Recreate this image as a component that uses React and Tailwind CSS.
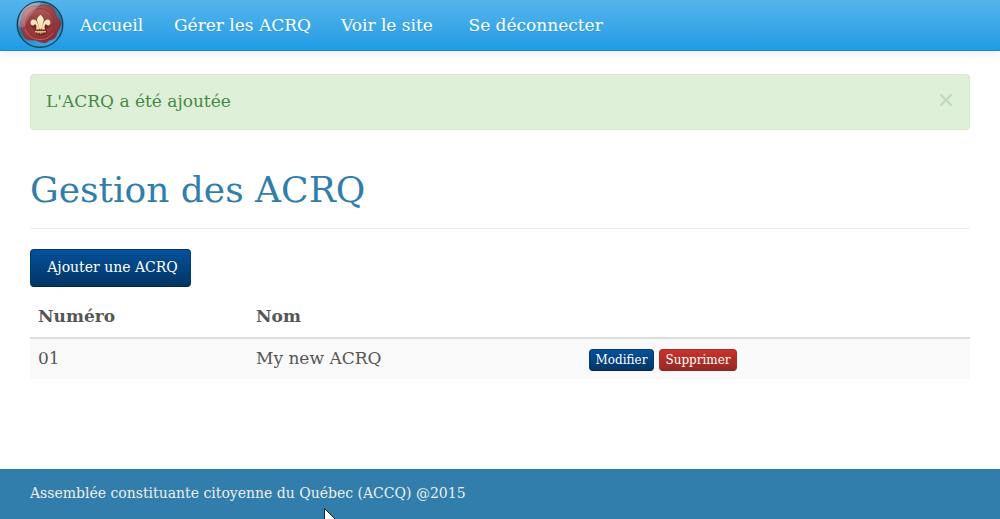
import React from "react";

const links = [
  { label: "Accueil", space: "w-[94px]" },
  { label: "Gérer les ACRQ", space: "w-[167px]" },
  { label: "Voir le site", space: "w-[127.5px]" },
  { label: "Se déconnecter", space: "" },
];

function Logo() {
  return (
    <svg viewBox="0 0 48 48" className="size-12 shrink-0">
      <defs>
        <linearGradient id="glass" x1="0" y1="0" x2="0.35" y2="1">
          <stop offset="0" stopColor="#8fb0c8" />
          <stop offset="0.3" stopColor="#4a7da3" />
          <stop offset="0.65" stopColor="#2b719f" />
          <stop offset="1" stopColor="#3ba0dd" />
        </linearGradient>
        <radialGradient id="wax" cx="0.35" cy="0.25" r="0.8">
          <stop offset="0" stopColor="#b9706f" />
          <stop offset="0.5" stopColor="#a04547" />
          <stop offset="1" stopColor="#87292e" />
        </radialGradient>
        <linearGradient id="seal" x1="0" y1="0" x2="0" y2="1">
          <stop offset="0" stopColor="#ab5c5a" />
          <stop offset="0.5" stopColor="#93393b" />
          <stop offset="1" stopColor="#a33437" />
        </linearGradient>
        <linearGradient id="shine" x1="0" y1="0" x2="0.9" y2="0.9">
          <stop offset="0" stopColor="#fff" stopOpacity="0.5" />
          <stop offset="1" stopColor="#fff" stopOpacity="0" />
        </linearGradient>
        <linearGradient id="gold" x1="0" y1="0" x2="0" y2="1">
          <stop offset="0" stopColor="#fff3cf" />
          <stop offset="0.75" stopColor="#f0d8a2" />
          <stop offset="1" stopColor="#c58c4e" />
        </linearGradient>
      </defs>
      <circle cx="24" cy="24.500" r="22.800" fill="url(#glass)" stroke="#1d4059" strokeWidth="1.4" />
      <path d="M12 8C16 5 20 7 26 5.500C32 4 38 7 39 13C40 18 46 21 44.500 25C44 29 41 31 40 36C38 40 34 39 31 42C27 44 23 41 19 40C14 40 9 40 8 36C7 31 5 29 5 25C4 21 7 19 7 15C7 11 9 9 12 8Z" fill="url(#wax)" stroke="#7b3037" strokeWidth="0.6" />
      <circle cx="24" cy="23" r="14.500" fill="url(#seal)" stroke="#802e33" strokeWidth="0.7" />
      <path d="M9 29A16 16 0 0 0 37 33" fill="none" stroke="#c36461" strokeWidth="0.9" />
      <path d="M25 17C28 19 28 22 28 21C32 19 37 23 33 27L29 30H31V34L25 36L20 34V31L15 26C14 23 18 21 21 23Z" fill="#571b1e" opacity="0.6" />
      <path d="M24.500 14.800C20.500 18 20.500 20 22 23L23.500 29.500H25.500L27 23C28.500 20 28 18 24.500 14.800ZM23 29.500C23 23.500 20 19.500 17.500 19.500C14 19.500 13.500 24.500 16.500 25.500C18 26 19 24 19 24C21 25 20.500 27 20 29.500ZM26 29.500C26 23.500 29 19.500 31.500 19.500C35 19.500 35.500 24.500 32.500 25.500C31 26 30 24 30 24C28 25 28.500 27 29 29.500ZM19 31H30V32.500H27L26 33.800L25 32.500L24.500 34.800L23.500 32.500L22 33.800L21 32.500H19Z" fill="url(#gold)" />
      <path d="M2.500 26C2 10 12 2 25 2C22 9 12 14 10 25C8 28 5 28 2.500 26Z" fill="url(#shine)" />
    </svg>
  );
}

function Button({ children, className }) {
  return <button className={`rounded border text-white ${className}`}>{children}</button>;
}

export default function App() {
  return (
    <div className="flex h-[519px] flex-col overflow-hidden bg-white font-['DejaVu_Serif',serif] text-[17px] leading-6 text-[#555]">
      <nav className="flex h-[51px] shrink-0 items-start border-b border-[#178acc] bg-linear-to-b from-[#54b4eb] to-[#1d9ce5] pl-4 text-white shadow-[0_1px_10px_rgba(0,0,0,0.1)]">
        <Logo />
        <div className="flex pt-[13px] pl-4 [text-shadow:0_1px_0_rgba(0,0,0,0.1)]">
          {links.map(({ label, space }) => (
            <a key={label} className={`shrink-0 whitespace-nowrap ${space}`}>{label}</a>
          ))}
        </div>
      </nav>
      <main className="flex flex-1 flex-col px-[30px] pt-[23px]">
        <div className="flex h-14 shrink-0 items-start justify-between rounded border border-[#d6e9c6] bg-[#dff0d8] px-[15px] pt-[14px] text-[#468847]">
          <span>L'ACRQ a été ajoutée</span>
          <svg viewBox="0 0 12 12" className="mt-[5px] mr-0.5 size-3" role="img" aria-label="Fermer">
            <path d="M.5.5L11.500 11.500M11.500.5L.5 11.500" stroke="#bfd8bd" strokeWidth="2" />
          </svg>
        </div>
        <h1 className="mt-10 h-[59px] shrink-0 border-b border-[#eee] text-[36px] leading-10 text-[#317eac]">Gestion des ACRQ</h1>
        <Button className="mt-5 h-[38px] w-[161px] shrink-0 border-[#02396f] border-b-[#022446] bg-linear-to-b from-[#04519b] to-[#033564] pb-0.5 pl-1 text-[14px] leading-5">Ajouter une ACRQ</Button>
        <table className="mt-2 w-full table-fixed border-collapse text-left">
          <colgroup><col className="w-[218px]" /><col className="w-[333px]" /><col /></colgroup>
          <thead>
            <tr className="h-[43px] border-b-2 border-[#ddd]">
              <th className="px-2 font-bold">Numéro</th>
              <th className="px-2 font-bold">Nom</th>
              <th />
            </tr>
          </thead>
          <tbody>
            <tr className="h-[41px] bg-[#f9f9f9]">
              <td className="px-2 pb-0.5">01</td>
              <td className="px-2 pb-0.5">My new ACRQ</td>
              <td className="px-2">
                <div className="flex gap-[5px] pt-0.5 text-[12px] leading-[18px]">
                  <Button className="h-[22px] w-[65px] border-[#02396f] border-b-[#022446] bg-linear-to-b from-[#04519b] to-[#033564]">Modifier</Button>
                  <Button className="h-[22px] w-[78px] border-[#b02c27] border-b-[#8c2521] bg-linear-to-b from-[#c9322b] to-[#942a25]">Supprimer</Button>
                </div>
              </td>
            </tr>
          </tbody>
        </table>
      </main>
      <footer className="relative h-[50px] shrink-0 bg-[#317eac] px-[30px] pt-3 text-[14px] text-[#eee]">
        Assemblée constituante citoyenne du Québec (ACCQ) @2015
        <svg viewBox="0 0 16 24" className="absolute top-[39px] left-[324px] h-6 w-4">
          <path d="M.5.5V18L5 14L8 21L11 20L8 13H13Z" fill="white" stroke="#222" />
        </svg>
      </footer>
    </div>
  );
}
